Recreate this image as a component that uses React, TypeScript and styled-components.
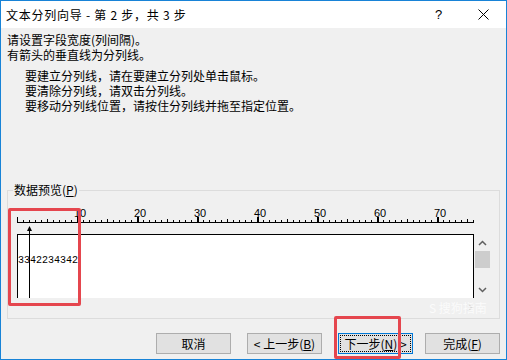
import React from 'react';
import styled, { createGlobalStyle } from 'styled-components';

const GlobalStyle = createGlobalStyle`
  html, body { margin: 0; padding: 0; background: #ffffff; }
  body { font-family: "Noto Sans CJK SC", "Liberation Sans", sans-serif; }
`;

const CJK = `"Noto Sans CJK SC", "Liberation Sans", sans-serif`;

const Window = styled.div`
  position: relative;
  width: 507px;
  height: 360px;
  box-sizing: border-box;
  border: 1px solid #1883d7;
  background: #f0f0f0;
  display: flex;
  flex-direction: column;
  font-family: ${CJK};
  font-size: 12px;
  color: #000;
  overflow: hidden;
`;

const TitleBar = styled.div`
  height: 27px;
  flex: none;
  background: #ffffff;
  display: flex;
  align-items: center;
  padding-left: 5px;
  font-size: 12px;
`;

const Title = styled.div`
  flex: 1;
  letter-spacing: 0.75px;
`;

const TitleButton = styled.div`
  width: 45px;
  height: 27px;
  display: flex;
  align-items: center;
  justify-content: center;
  font-family: "Liberation Sans", sans-serif;
  font-size: 13px;
`;

const Body = styled.div`
  flex: 1;
  display: flex;
  flex-direction: column;
  padding: 4px 6px 0 6px;
`;

const TextBlock = styled.div<{ $indent?: number; $top?: number }>`
  margin-left: ${(p) => p.$indent ?? 0}px;
  margin-top: ${(p) => p.$top ?? 0}px;
  line-height: 15px;
  white-space: nowrap;
`;

const Group = styled.div`
  position: relative;
  margin-top: 77px;
  height: 129px;
  flex: none;
  box-sizing: border-box;
  border: 1px solid #dcdcdc;
  padding: 17px 0 0 9px;
`;

const GroupLabel = styled.span`
  position: absolute;
  top: -9px;
  left: 5px;
  padding: 0 1px;
  line-height: 16px;
  background: #f0f0f0;
`;

const Preview = styled.div`
  position: relative;
  width: 474px;
  display: grid;
  grid-template-columns: 457px 17px;
  grid-template-rows: 26px 64px 19px;
`;

const Ruler = styled.svg`
  grid-column: 1 / 2;
  display: block;
`;

const DataArea = styled.div`
  grid-column: 1 / 2;
  background: #ffffff;
  border-top: 1px solid #000;
  border-left: 1px solid #000;
  border-right: 1px solid #000;
  box-sizing: border-box;
  padding-top: 19px;
  font-family: "Liberation Mono", monospace;
  font-size: 10px;
  line-height: 13px;
`;

const VScroll = styled.div`
  grid-column: 2 / 3;
  display: flex;
  flex-direction: column;
  align-items: center;
  background: #f0f0f0;
`;

const ScrollArrow = styled.div`
  height: 17px;
  width: 17px;
  display: flex;
  align-items: center;
  justify-content: center;
`;

const Thumb = styled.div`
  width: 15px;
  height: 17px;
  background: #cdcdcd;
`;

const Track = styled.div`
  flex: 1;
`;

const HScroll = styled.div`
  grid-column: 1 / 2;
  display: flex;
  justify-content: flex-end;
  align-items: center;
  padding-right: 1px;
  background: #f0f0f0;
`;

const SplitArrow = styled.svg`
  position: absolute;
  left: 10px;
  top: 18px;
`;

const ButtonRow = styled.div`
  display: flex;
  justify-content: flex-end;
  margin-top: 14px;
`;

const Button = styled.div<{ $gap?: number; $focused?: boolean }>`
  width: 75px;
  height: 21px;
  box-sizing: border-box;
  margin-left: ${(p) => p.$gap ?? 0}px;
  background: #e1e1e1;
  border: 1px solid ${(p) => (p.$focused ? '#0078d7' : '#adadad')};
  display: flex;
  align-items: center;
  justify-content: center;
  padding: ${(p) => (p.$focused ? '1px' : '0')};
  white-space: nowrap;
  line-height: 15px;
`;

const FocusRing = styled.span`
  flex: 1;
  align-self: stretch;
  display: flex;
  align-items: center;
  justify-content: center;
  outline: 1px dotted #000;
  outline-offset: -1px;
`;

const Mark = styled.div<{ $left: number; $top: number; $w: number; $h: number }>`
  position: absolute;
  left: ${(p) => p.$left}px;
  top: ${(p) => p.$top}px;
  width: ${(p) => p.$w}px;
  height: ${(p) => p.$h}px;
  box-sizing: border-box;
  border: 3px solid #e5464e;
  border-radius: 2px;
  pointer-events: none;
`;

const Watermark = styled.div`
  position: absolute;
  left: 428px;
  top: 298px;
  color: rgba(255, 255, 255, 0.75);
  font-size: 12px;
  pointer-events: none;
`;

function RulerDrawing() {
  const ticks = [];
  const labels = [];
  for (let i = 0; i <= 76; i++) {
    const x = i * 6;
    const major = i % 10 === 0;
    const mid = i % 5 === 0;
    const h = major ? 5 : mid ? 3 : 2;
    ticks.push(
      <rect key={i} x={x} y={14 - h} width={major && i > 0 ? 2 : 1} height={h} fill="#000" />
    );
    if (major && i > 0) {
      labels.push(
        <text key={'t' + i} x={x - 3} y={9} fontSize="11" fontFamily="Liberation Sans, sans-serif" fill="#000">
          {i}
        </text>
      );
    }
  }
  return (
    <Ruler width={457} height={26} viewBox="0 0 457 26">
      <rect x={0} y={14} width={457} height={1} fill="#000" />
      {ticks}
      {labels}
    </Ruler>
  );
}

export default function App() {
  return (
    <>
      <GlobalStyle />
      <Window>
        <TitleBar>
          <Title>文本分列向导 - 第 2 步，共 3 步</Title>
          <TitleButton>?</TitleButton>
          <TitleButton>
            <svg width="11" height="11" viewBox="0 0 11 11">
              <path d="M0.5 0.5 L10.5 10.5 M10.5 0.5 L0.5 10.5" stroke="#000" strokeWidth="1" fill="none" />
            </svg>
          </TitleButton>
        </TitleBar>
        <Body>
          <TextBlock>
            请设置字段宽度(列间隔)。
            <br />
            有箭头的垂直线为分列线。
          </TextBlock>
          <TextBlock $indent={18} $top={6}>
            要建立分列线，请在要建立分列处单击鼠标。
            <br />
            要清除分列线，请双击分列线。
            <br />
            要移动分列线位置，请按住分列线并拖至指定位置。
          </TextBlock>
          <Group>
            <GroupLabel>
              数据预览(<u>P</u>)
            </GroupLabel>
            <Preview>
              <RulerDrawing />
              <Track />
              <DataArea>3342234342</DataArea>
              <VScroll>
                <ScrollArrow>
                  <svg width="9" height="6" viewBox="0 0 9 6">
                    <path d="M1 5 L4.5 1.5 L8 5" stroke="#606060" strokeWidth="1.5" fill="none" />
                  </svg>
                </ScrollArrow>
                <Thumb />
                <Track />
                <ScrollArrow>
                  <svg width="9" height="6" viewBox="0 0 9 6">
                    <path d="M1 1 L4.5 4.5 L8 1" stroke="#606060" strokeWidth="1.5" fill="none" />
                  </svg>
                </ScrollArrow>
              </VScroll>
              <HScroll>
                <svg width="6" height="9" viewBox="0 0 6 9">
                  <path d="M1 1 L4.5 4.5 L1 8" stroke="#d8d8d8" strokeWidth="1.5" fill="none" />
                </svg>
              </HScroll>
              <Track />
              <SplitArrow width="5" height="72" viewBox="0 0 5 72">
                <path d="M2.5 0 L5 5 L0 5 Z" fill="#000" />
                <rect x={2} y={4} width={1} height={68} fill="#000" />
              </SplitArrow>
            </Preview>
          </Group>
          <ButtonRow>
            <Button>取消</Button>
            <Button $gap={16}>
              &lt; 上一步(<u>B</u>)
            </Button>
            <Button $gap={16} $focused>
              <FocusRing>
                下一步(<u>N</u>) &gt;
              </FocusRing>
            </Button>
            <Button $gap={12}>
              完成(<u>F</u>)
            </Button>
          </ButtonRow>
        </Body>
        <Watermark>S 搜狗指南</Watermark>
        <Mark $left={7} $top={207} $w={73} $h={98} />
        <Mark $left={333} $top={315} $w={67} $h={43} />
      </Window>
    </>
  );
}
